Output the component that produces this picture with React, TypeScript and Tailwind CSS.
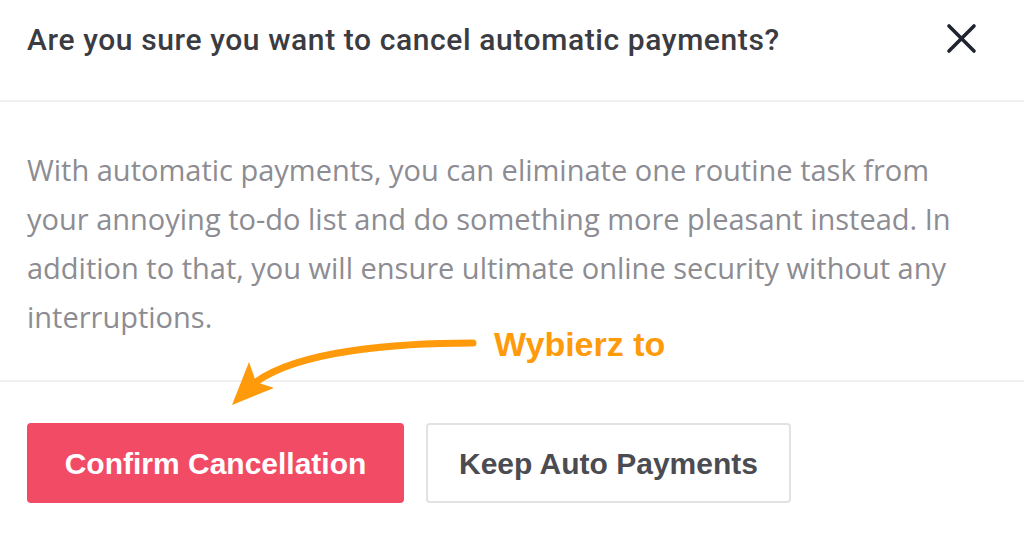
import React from 'react';

export default function App() {
  return (
    <div className="relative w-[1024px] h-[537px] overflow-hidden bg-white">
      {/* header */}
      <div className="h-[102px] border-b-2 border-[#f0f0f0] flex items-start justify-between pl-[27px] pr-[47px] pt-[22px]">
        <h2 className="text-[30px] leading-[36px] tracking-[0.6px] font-medium text-[#3b3b42]" style={{ fontFamily: 'Roboto, "Liberation Sans", sans-serif' }}>
          Are you sure you want to cancel automatic payments?
        </h2>
        <button className="mt-[1px] text-[#1f2430]">
          <svg width="31" height="31" viewBox="0 0 31 31" fill="none" stroke="currentColor" strokeWidth="3.6" strokeLinecap="round">
            <path d="M3 3 L28 28 M28 3 L3 28" />
          </svg>
        </button>
      </div>

      {/* body */}
      <div className="h-[280px] border-b-2 border-[#f0f0f0] pl-[27px] pr-[52px] pt-[43px]">
        <p className="text-[29px] leading-[49px] text-[#8c8c92]" style={{ fontFamily: '"Open Sans", sans-serif' }}>
          With automatic payments, you can eliminate one routine task from your annoying to-do list and do something more pleasant instead. In addition to that, you will ensure ultimate online security without any interruptions.
        </p>
      </div>

      {/* footer */}
      <div className="flex gap-[22px] pl-[27px] pt-[41px]" style={{ fontFamily: '"Liberation Sans", sans-serif' }}>
        <button className="w-[377px] h-[80px] rounded-[4px] bg-[#f24b66] text-white text-[30px] font-bold">
          Confirm Cancellation
        </button>
        <button className="w-[365px] h-[80px] rounded-[4px] border-2 border-[#e2e2e2] bg-white text-[#4b4b52] text-[30px] font-bold">
          Keep Auto Payments
        </button>
      </div>

      {/* annotation */}
      <svg className="absolute inset-0 pointer-events-none" width="1024" height="537" viewBox="0 0 1024 537">
        <path d="M473 343 C 400 343, 300 350, 256 382" fill="none" stroke="#ff9a0a" strokeWidth="7" strokeLinecap="round" />
        <polygon points="232,405 249,362 256,382 274,388" fill="#ff9a0a" />
      </svg>
      <div className="absolute left-[494px] top-[325px] text-[34px] leading-[38px] font-bold text-[#ff9a0a]" style={{ fontFamily: '"Liberation Sans", Arial, sans-serif' }}>
        Wybierz to
      </div>
    </div>
  );
}
